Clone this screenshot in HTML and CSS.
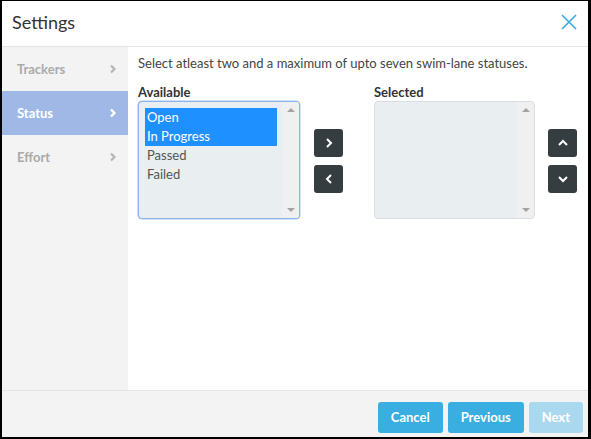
FILE: index.html
```html
<!DOCTYPE html>
<html>
<head>
<meta charset="utf-8">
<link rel="stylesheet" href="styles.css">
</head>
<body>
<div class="dialog">
  <div class="header">
    <div class="title">Settings</div>
    <svg class="close" width="16" height="16" viewBox="0 0 16 16"><path d="M1 1L15 15M15 1L1 15" stroke="#3aa8e0" stroke-width="1.6" fill="none"/></svg>
  </div>
  <div class="main">
    <div class="sidebar">
      <div class="nav-item"><span>Trackers</span><svg class="chev" width="8" height="10" viewBox="0 0 8 10"><path d="M2 1.5L5.5 5L2 8.5" stroke="currentColor" stroke-width="2.2" fill="none"/></svg></div>
      <div class="nav-item active"><span>Status</span><svg class="chev" width="8" height="10" viewBox="0 0 8 10"><path d="M2 1.5L5.5 5L2 8.5" stroke="currentColor" stroke-width="2.2" fill="none"/></svg></div>
      <div class="nav-item"><span>Effort</span><svg class="chev" width="8" height="10" viewBox="0 0 8 10"><path d="M2 1.5L5.5 5L2 8.5" stroke="currentColor" stroke-width="2.2" fill="none"/></svg></div>
    </div>
    <div class="content">
      <div class="intro">Select atleast two and a maximum of upto seven swim-lane statuses.</div>
      <div class="lists">
        <div class="col col-avail">
          <div class="label">Available</div>
          <div class="listbox focused">
            <div class="options">
              <div class="opt sel">Open</div>
              <div class="opt sel">In Progress</div>
              <div class="opt">Passed</div>
              <div class="opt">Failed</div>
            </div>
            <div class="scroll"><span class="up"></span><span class="down"></span></div>
          </div>
        </div>
        <div class="btns btns-mid">
          <div class="ibtn"><svg width="12" height="12" viewBox="0 0 12 12"><path d="M4 2L8 6L4 10" stroke="#fff" stroke-width="2" fill="none"/></svg></div>
          <div class="ibtn"><svg width="12" height="12" viewBox="0 0 12 12"><path d="M8 2L4 6L8 10" stroke="#fff" stroke-width="2" fill="none"/></svg></div>
        </div>
        <div class="col col-sel">
          <div class="label">Selected</div>
          <div class="listbox">
            <div class="options"></div>
            <div class="scroll"><span class="up"></span><span class="down"></span></div>
          </div>
        </div>
        <div class="btns btns-right">
          <div class="ibtn"><svg width="12" height="12" viewBox="0 0 12 12"><path d="M2 8L6 4L10 8" stroke="#fff" stroke-width="2" fill="none"/></svg></div>
          <div class="ibtn"><svg width="12" height="12" viewBox="0 0 12 12"><path d="M2 4L6 8L10 4" stroke="#fff" stroke-width="2" fill="none"/></svg></div>
        </div>
      </div>
    </div>
  </div>
  <div class="footer">
    <div class="btn">Cancel</div>
    <div class="btn">Previous</div>
    <div class="btn disabled">Next</div>
  </div>
</div>
</body>
</html>
```
FILE: styles.css
```css
html, body { margin: 0; padding: 0; }
body {
  background: #000;
  width: 591px;
  height: 439px;
  overflow: hidden;
  font-family: "Lato", "Open Sans", sans-serif;
}
.dialog {
  margin: 1px 3px 2px 2px;
  width: 586px;
  height: 436px;
  background: #fff;
  display: flex;
  flex-direction: column;
}
.header {
  height: 45px;
  border-bottom: 1px solid #e5e5e5;
  display: flex;
  align-items: center;
  justify-content: space-between;
  padding: 0 11px 0 10px;
}
.title {
  font-size: 18px;
  color: #333;
  margin-top: -4px;
}
.close { margin-top: -4px; }
.main {
  flex: 1;
  display: flex;
}
.sidebar {
  width: 126px;
  background: #f3f3f3;
}
.nav-item {
  height: 44px;
  display: flex;
  align-items: center;
  justify-content: space-between;
  padding: 0 11px 0 15px;
  color: #aaa;
  font-size: 13px;
  font-weight: bold;
}
.nav-item.active {
  background: #9fb8e5;
  color: #fff;
}
.chev { color: #b5b5b5; }
.nav-item.active .chev { color: #fff; }
.content {
  flex: 1;
  padding: 8px 0 0 10px;
  color: #444;
  font-size: 13px;
}
.intro { height: 29px; }
.lists { display: flex; align-items: flex-start; }
.label {
  font-weight: bold;
  color: #333;
  height: 17px;
}
.listbox {
  height: 116px;
  border: 1px solid #d8dfe3;
  border-radius: 4px;
  background: #e9eef0;
  display: flex;
  overflow: hidden;
}
.listbox.focused { border-color: #8ab4f0; box-shadow: 0 0 0 0.5px #a8c8f5; }
.col-avail .listbox { width: 160px; }
.col-sel .listbox { width: 159px; }
.options {
  flex: 1;
  padding: 6px 0 0 6px;
}
.opt {
  height: 19px;
  line-height: 19px;
  padding-left: 2px;
  color: #555;
  width: 130px;
}
.opt.sel { background: #1e90ff; color: #fff; }
.scroll {
  width: 17px;
  background: #f0f0f0;
  position: relative;
}
.up, .down {
  position: absolute;
  left: 5px;
  width: 0; height: 0;
  border-left: 4px solid transparent;
  border-right: 4px solid transparent;
}
.up { top: 6px; border-bottom: 4px solid #a3a3a3; }
.down { bottom: 6px; border-top: 4px solid #a3a3a3; }
.btns {
  display: flex;
  flex-direction: column;
  gap: 8px;
  margin-top: 45px;
}
.btns-mid { margin-left: 14px; margin-right: 31px; }
.btns-right { margin-left: 13px; }
.ibtn {
  width: 29px;
  height: 28px;
  background: #353d40;
  border-radius: 3px;
  display: flex;
  align-items: center;
  justify-content: center;
}
.footer {
  border-top: 1px solid #e3e3e3;
  background: #f3f3f3;
  display: flex;
  justify-content: flex-end;
  align-items: flex-start;
  gap: 5px;
  padding: 11px 5px 0 0;
  box-sizing: border-box;
  height: 47px;
}
.btn {
  height: 31px;
  line-height: 31px;
  padding: 0 13px;
  background: #3aaee0;
  color: #fff;
  border-radius: 3px;
  font-size: 13px;
  font-weight: bold;
}
.btn.disabled { background: #a9d8ef; }
```
